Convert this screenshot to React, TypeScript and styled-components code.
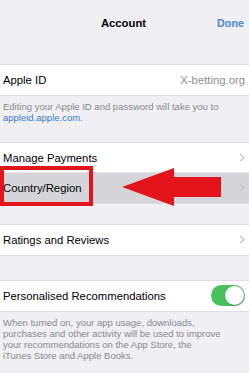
import styled, { createGlobalStyle } from 'styled-components';

const GlobalStyle = createGlobalStyle`
  html, body {
    margin: 0;
    padding: 0;
    background: #efeff4;
  }
  body {
    font-family: "Liberation Sans", Arial, sans-serif;
    -webkit-font-smoothing: antialiased;
  }
`;

const Page = styled.div`
  position: relative;
  width: 249px;
  height: 373px;
  overflow: hidden;
  background: #efeff4;
  color: #000;
`;

const NavBar = styled.div`
  position: relative;
  height: 46px;
  display: flex;
  align-items: center;
  justify-content: center;
`;

const NavTitle = styled.div`
  font-size: 11.3px;
  font-weight: 700;
  margin-left: -2px;
`;

const NavAction = styled.div`
  position: absolute;
  right: 5px;
  top: 0;
  height: 46px;
  display: flex;
  align-items: center;
  font-size: 10.8px;
  font-weight: 700;
  color: #4a88d2;
`;

const Group = styled.div<{ $gap: number }>`
  margin-top: ${(p) => p.$gap}px;
  background: #fff;
  border-top: 1px solid #dfdfe3;
  border-bottom: 1px solid #dfdfe3;
`;

const Row = styled.div<{ $active?: boolean; $divider?: boolean }>`
  height: 30px;
  display: flex;
  align-items: center;
  justify-content: space-between;
  padding: 0 4px 0 3px;
  font-size: 11.3px;
  background: ${(p) => (p.$active ? '#d6d6da' : '#fff')};
  box-shadow: ${(p) => (p.$divider ? 'inset 0 -1px 0 #e4e4e8' : 'none')};
`;

const Value = styled.span`
  color: #8e8e93;
`;

const Footer = styled.div`
  padding: 5px 10px 0 3px;
  font-size: 9.5px;
  line-height: 11.3px;
  color: #8a8a8f;
  white-space: nowrap;
`;

const Link = styled.span`
  color: #3a7bc9;
`;

const Switch = styled.div<{ $on: boolean }>`
  position: relative;
  width: 34px;
  height: 21px;
  border-radius: 11px;
  background: ${(p) => (p.$on ? '#47c25b' : '#e5e5ea')};
`;

const Knob = styled.div<{ $on: boolean }>`
  position: absolute;
  top: 1px;
  left: ${(p) => (p.$on ? '14px' : '1px')};
  width: 19px;
  height: 19px;
  border-radius: 50%;
  background: #fff;
  box-shadow: 0 1px 2px rgba(0, 0, 0, 0.25);
`;

const Highlight = styled.div`
  position: absolute;
  left: 0;
  top: 166px;
  width: 93px;
  height: 40px;
  box-sizing: border-box;
  border: 4px solid #e3141c;
`;

const Arrow = styled.svg`
  position: absolute;
  left: 0;
  top: 0;
  pointer-events: none;
`;

const Chevron = () => (
  <svg width="6" height="9" viewBox="0 0 6 9">
    <polyline points="1,1 5,4.5 1,8" fill="none" stroke="#c4c4c9" strokeWidth="1.3" />
  </svg>
);

export default function App() {
  return (
    <Page>
      <GlobalStyle />
      <NavBar>
        <NavTitle>Account</NavTitle>
        <NavAction>Done</NavAction>
      </NavBar>

      <Group $gap={18}>
        <Row>
          <span>Apple ID</span>
          <Value>X-betting.org</Value>
        </Row>
      </Group>
      <Footer>
        Editing your Apple ID and password will take you to
        <br />
        <Link>appleid.apple.com.</Link>
      </Footer>

      <Group $gap={18}>
        <Row $divider>
          <span>Manage Payments</span>
          <Chevron />
        </Row>
        <Row $active>
          <span>Country/Region</span>
          <Chevron />
        </Row>
      </Group>

      <Group $gap={20}>
        <Row>
          <span>Ratings and Reviews</span>
          <Chevron />
        </Row>
      </Group>

      <Group $gap={24}>
        <Row>
          <span>Personalised Recommendations</span>
          <Switch $on>
            <Knob $on />
          </Switch>
        </Row>
      </Group>
      <Footer>
        When turned on, your app usage, downloads,
        <br />
        purchases and other activity will be used to improve
        <br />
        your recommendations on the App Store, the
        <br />
        iTunes Store and Apple Books.
      </Footer>

      <Highlight />
      <Arrow width="249" height="373" viewBox="0 0 249 373">
        <polygon
          points="122,187 174,168 174,177 221,177 221,197 174,197 174,206"
          fill="#e3141c"
        />
      </Arrow>
    </Page>
  );
}
